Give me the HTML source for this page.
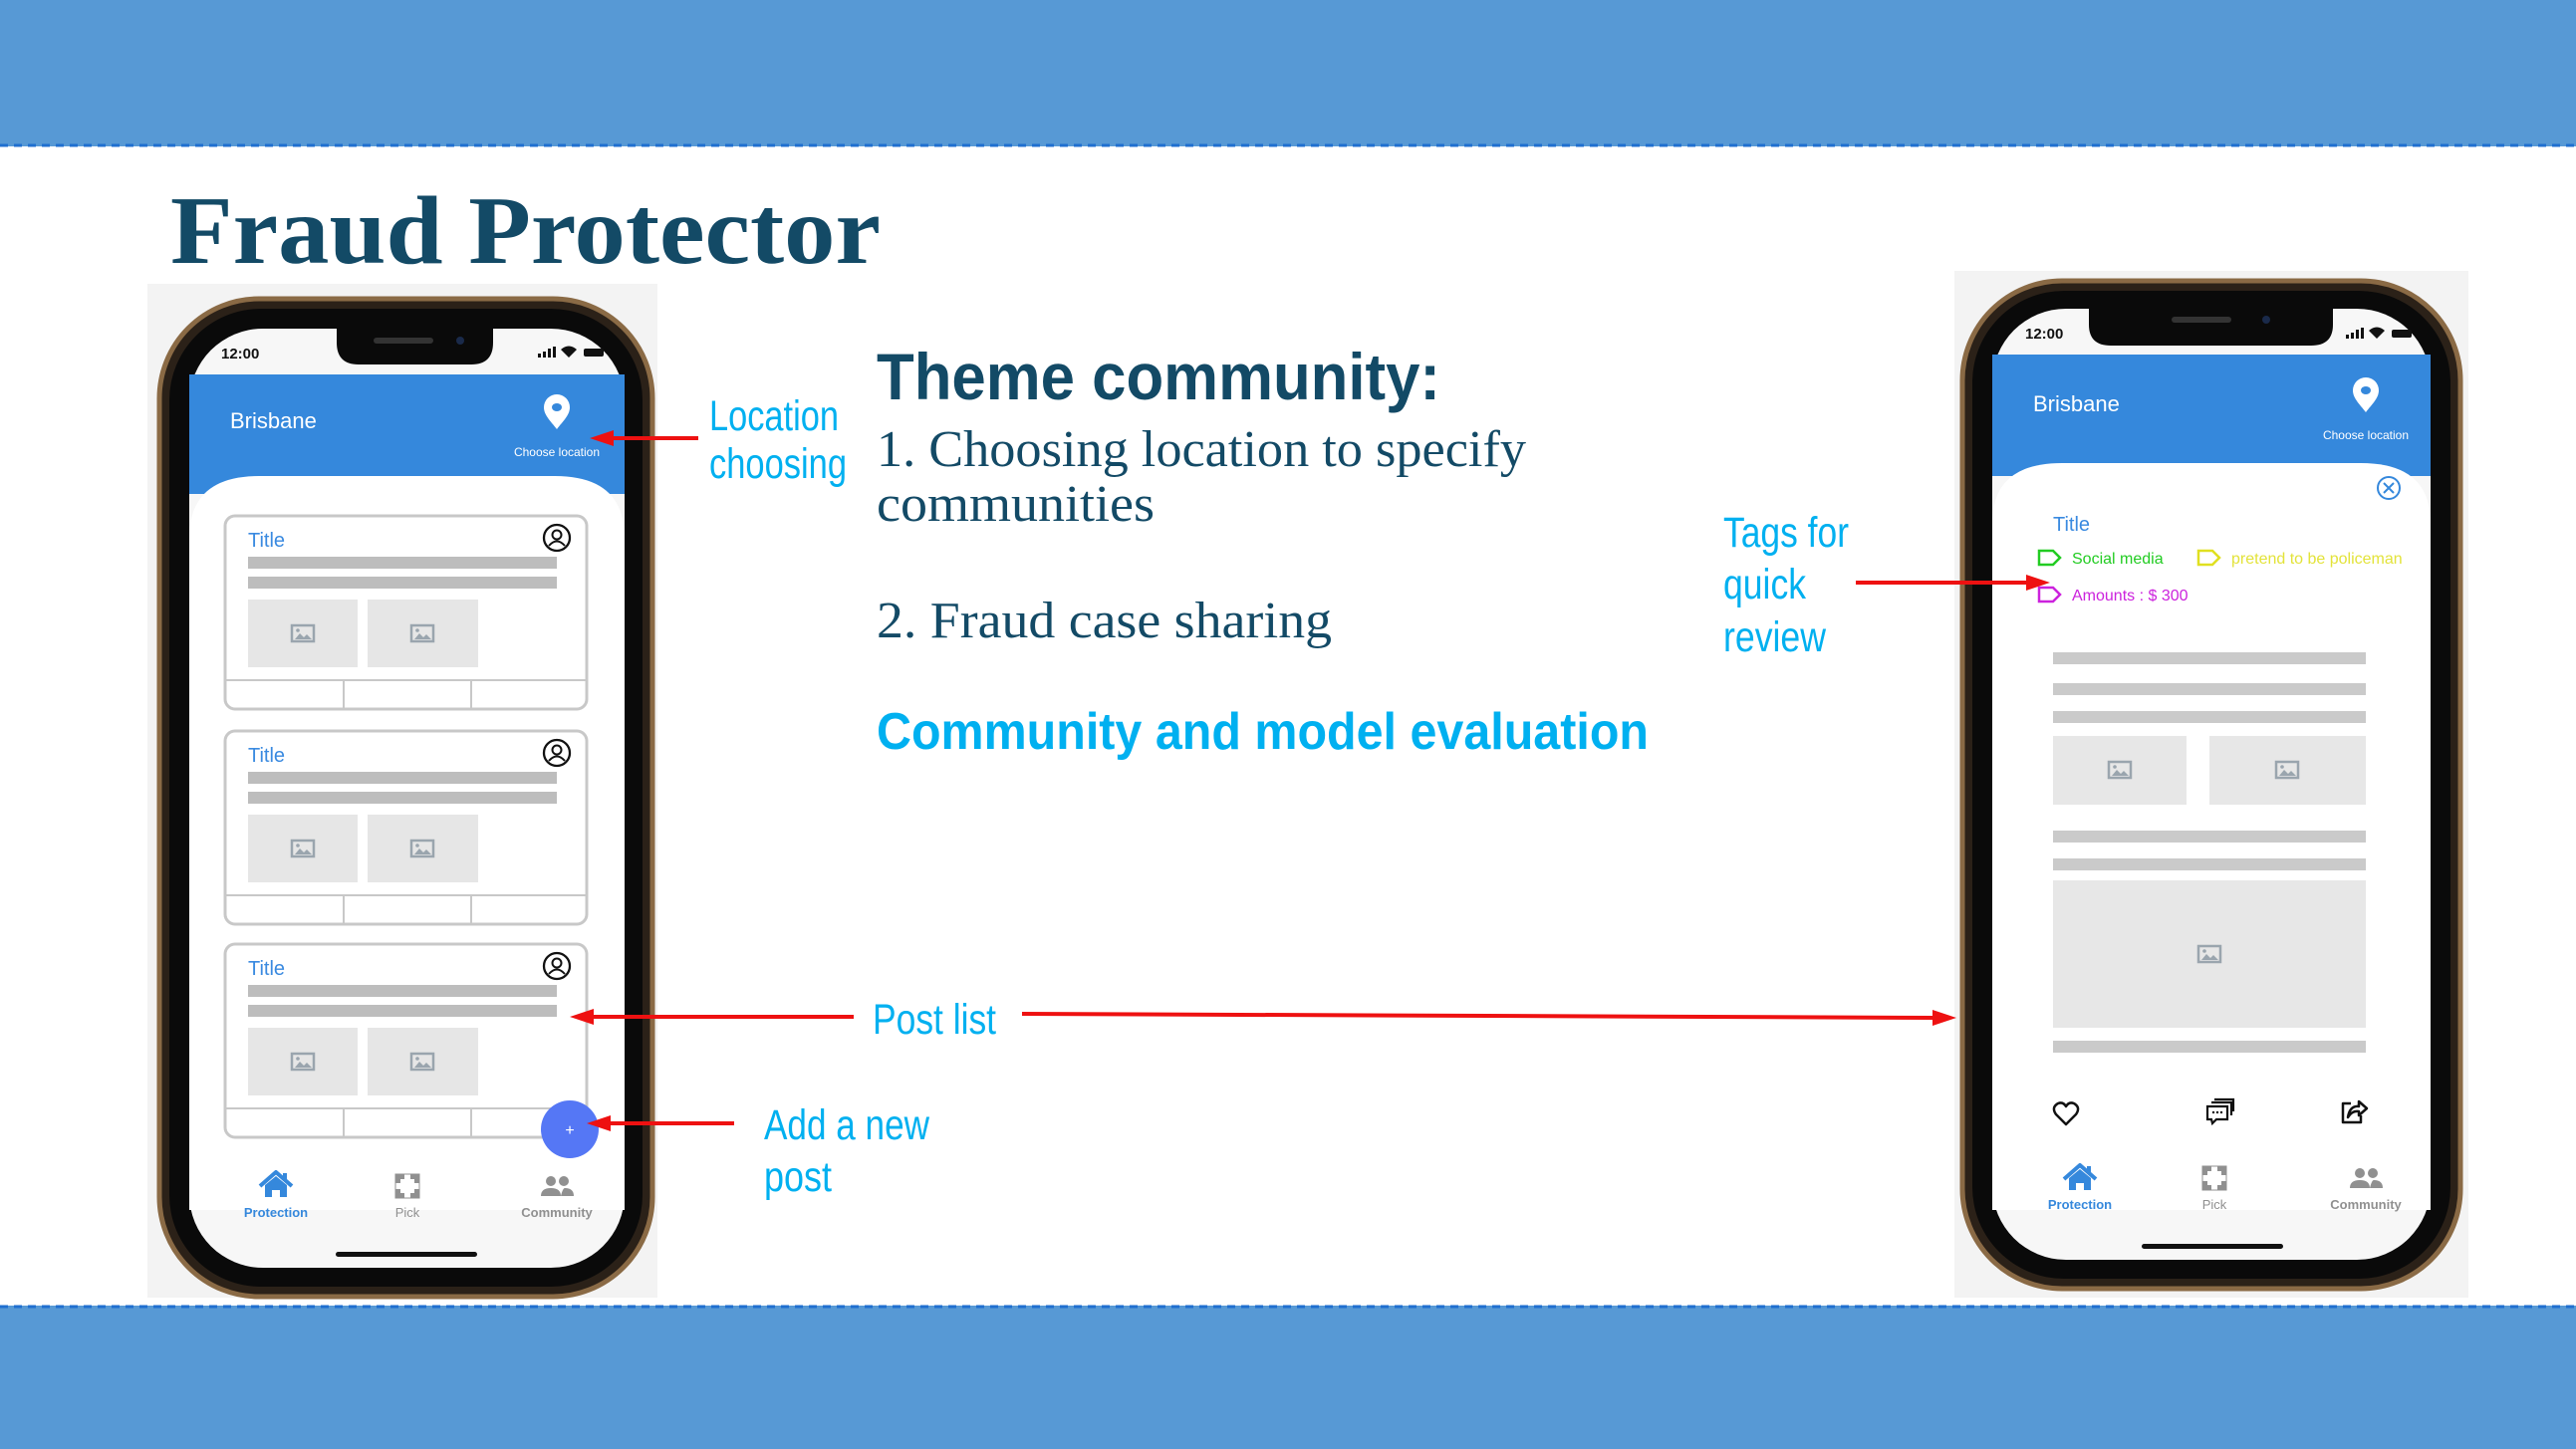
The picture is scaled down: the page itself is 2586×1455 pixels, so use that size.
<!DOCTYPE html>
<html><head><meta charset="utf-8"><style>html,body{margin:0;padding:0;background:#fff}svg{display:block}</style></head>
<body>
<svg width="2586" height="1455" viewBox="0 0 2586 1455" xmlns="http://www.w3.org/2000/svg" font-family="Liberation Sans, sans-serif">
<defs>
<g id="img"><rect x="-11" y="-8" width="22" height="16" fill="none" stroke="#9aa5ae" stroke-width="2.5"/><path d="M-8 6 L-3 0 L1 4 L4 1 L9 6 Z" fill="#9aa5ae"/><circle cx="-5" cy="-3" r="1.8" fill="#9aa5ae"/></g>
<g id="av"><circle r="13" fill="#fff" stroke="#111" stroke-width="2.3"/><circle cx="0" cy="-3" r="4.5" fill="none" stroke="#111" stroke-width="2"/><path d="M-8 8 Q0 -1 8 8" fill="none" stroke="#111" stroke-width="2"/></g>
<g id="pin"><path d="M0 18 C-6 10 -13 4 -13 -4 A13 13 0 0 1 13 -4 C13 4 6 10 0 18 Z" fill="#fff"/><ellipse cx="0" cy="-4" rx="5" ry="4" fill="#3588dc"/></g>
<g id="home"><path d="M-16 1 L0 -13 L16 1 M9 -12 L9 -6" fill="none" stroke="#3588dc" stroke-width="4" stroke-linejoin="round"/><path d="M-11 0 L0 -9 L11 0 L11 12 L4 12 L4 5 L-4 5 L-4 12 L-11 12 Z" fill="#3588dc"/></g>
<g id="pick" fill="#909090"><path d="M-12 -12 H-3 V-7 H-7 V-3 H-12 Z M12 -12 H3 V-7 H7 V-3 H12 Z M-12 12 H-3 V7 H-7 V3 H-12 Z M12 12 H3 V7 H7 V3 H12 Z"/><rect x="-12" y="-12" width="24" height="24" fill="none" stroke="#909090" stroke-width="1"/></g>
<g id="comm" fill="#909090"><circle cx="-6" cy="-6" r="5"/><circle cx="7" cy="-6" r="5"/><path d="M-16 9 Q-16 1 -6 1 Q4 1 4 9 Z M4 9 Q6 1 8 1 Q17 1 17 9 Z"/></g>
</defs>

<!-- bands -->
<rect x="0" y="0" width="2586" height="147" fill="#5799d5"/>
<line x1="0" y1="146" x2="2586" y2="146" stroke="#1f6fd0" stroke-width="3" stroke-dasharray="8 6"/>
<rect x="0" y="1311" width="2586" height="144" fill="#5799d5"/>
<line x1="0" y1="1312" x2="2586" y2="1312" stroke="#1f6fd0" stroke-width="3" stroke-dasharray="8 6"/>

<!-- title -->
<text x="171" y="264" font-family="Liberation Serif, serif" font-weight="bold" font-size="98" fill="#134a66" textLength="713" lengthAdjust="spacingAndGlyphs">Fraud Protector</text>

<!-- middle text -->
<text x="880" y="401" font-weight="bold" font-size="66" fill="#134a66" textLength="566" lengthAdjust="spacingAndGlyphs">Theme community:</text>
<g font-family="Liberation Serif, serif" font-size="52" fill="#134a66">
<text x="880" y="468" textLength="652" lengthAdjust="spacingAndGlyphs">1. Choosing location to specify</text>
<text x="880" y="523" textLength="279" lengthAdjust="spacingAndGlyphs">communities</text>
<text x="880" y="640" textLength="457" lengthAdjust="spacingAndGlyphs">2. Fraud case sharing</text>
</g>
<text x="880" y="752" font-weight="bold" font-size="52" fill="#00b0f0" textLength="775" lengthAdjust="spacingAndGlyphs">Community and model evaluation</text>

<!-- labels -->
<g font-size="43" fill="#00b0f0">
<text x="712" y="432" textLength="130" lengthAdjust="spacingAndGlyphs">Location</text>
<text x="712" y="480" textLength="138" lengthAdjust="spacingAndGlyphs">choosing</text>
<text x="876" y="1038" textLength="124" lengthAdjust="spacingAndGlyphs">Post list</text>
<text x="767" y="1144" textLength="166" lengthAdjust="spacingAndGlyphs">Add a new</text>
<text x="767" y="1196" textLength="68" lengthAdjust="spacingAndGlyphs">post</text>
<text x="1730" y="549" textLength="126" lengthAdjust="spacingAndGlyphs">Tags for</text>
<text x="1730" y="601" textLength="83" lengthAdjust="spacingAndGlyphs">quick</text>
<text x="1730" y="654" textLength="103" lengthAdjust="spacingAndGlyphs">review</text>
</g>

<!-- ===== LEFT PHONE ===== -->
<rect x="148" y="285" width="512" height="1018" fill="#f3f3f3"/>
<rect x="160" y="300" width="495" height="1002" rx="100" fill="#2b2118" stroke="#8a6a45" stroke-width="5"/>
<rect x="170" y="310" width="475" height="982" rx="92" fill="#0a0a0a"/>
<rect x="190" y="330" width="437" height="943" rx="74" fill="#f7f7f7"/>
<rect x="190" y="376" width="437" height="120" fill="#3588dc"/>
<path d="M190 540 Q190 478 260 478 L557 478 Q627 478 627 540 L627 1160 L190 1160 Z" fill="#fff"/>
<rect x="190" y="1160" width="437" height="55" fill="#fff"/>
<path d="M338 330 H495 V344 Q495 366 473 366 H360 Q338 366 338 344 Z" fill="#0a0a0a"/>
<rect x="375" y="339" width="60" height="6" rx="3" fill="#333"/>
<circle cx="462" cy="342" r="4" fill="#1a2a4a"/>
<text x="222" y="360" font-size="15" font-weight="bold" fill="#111">12:00</text>
<g fill="#111"><rect x="540" y="355" width="3" height="4"/><rect x="545" y="353" width="3" height="6"/><rect x="550" y="350" width="3" height="9"/><rect x="555" y="348" width="3" height="11"/><path d="M563 351 Q571 344 579 351 L571 359 Z"/><rect x="586" y="350" width="20" height="8" rx="2"/></g>
<text x="231" y="430" font-size="22" fill="#fff">Brisbane</text>
<use href="#pin" x="559" y="413"/>
<text x="559" y="458" font-size="12" fill="#fff" text-anchor="middle">Choose location</text>

<!-- cards -->
<g transform="translate(226,518)">
<rect x="0" y="0" width="363" height="194" rx="10" fill="#fff" stroke="#c8c8c8" stroke-width="3"/>
<text x="23" y="31" font-size="20" fill="#3a8ae0">Title</text><use href="#av" x="333" y="22"/>
<rect x="23" y="41" width="310" height="12" fill="#bdbdbd"/><rect x="23" y="61" width="310" height="12" fill="#bdbdbd"/>
<rect x="23" y="84" width="110" height="68" fill="#e6e6e6"/><rect x="143" y="84" width="111" height="68" fill="#e6e6e6"/>
<use href="#img" x="78" y="118"/><use href="#img" x="198" y="118"/>
<line x1="0" y1="165" x2="363" y2="165" stroke="#c8c8c8" stroke-width="2"/><line x1="119" y1="165" x2="119" y2="194" stroke="#c8c8c8" stroke-width="2"/><line x1="247" y1="165" x2="247" y2="194" stroke="#c8c8c8" stroke-width="2"/>
</g>
<g transform="translate(226,734)">
<rect x="0" y="0" width="363" height="194" rx="10" fill="#fff" stroke="#c8c8c8" stroke-width="3"/>
<text x="23" y="31" font-size="20" fill="#3a8ae0">Title</text><use href="#av" x="333" y="22"/>
<rect x="23" y="41" width="310" height="12" fill="#bdbdbd"/><rect x="23" y="61" width="310" height="12" fill="#bdbdbd"/>
<rect x="23" y="84" width="110" height="68" fill="#e6e6e6"/><rect x="143" y="84" width="111" height="68" fill="#e6e6e6"/>
<use href="#img" x="78" y="118"/><use href="#img" x="198" y="118"/>
<line x1="0" y1="165" x2="363" y2="165" stroke="#c8c8c8" stroke-width="2"/><line x1="119" y1="165" x2="119" y2="194" stroke="#c8c8c8" stroke-width="2"/><line x1="247" y1="165" x2="247" y2="194" stroke="#c8c8c8" stroke-width="2"/>
</g>
<g transform="translate(226,948)">
<rect x="0" y="0" width="363" height="194" rx="10" fill="#fff" stroke="#c8c8c8" stroke-width="3"/>
<text x="23" y="31" font-size="20" fill="#3a8ae0">Title</text><use href="#av" x="333" y="22"/>
<rect x="23" y="41" width="310" height="12" fill="#bdbdbd"/><rect x="23" y="61" width="310" height="12" fill="#bdbdbd"/>
<rect x="23" y="84" width="110" height="68" fill="#e6e6e6"/><rect x="143" y="84" width="111" height="68" fill="#e6e6e6"/>
<use href="#img" x="78" y="118"/><use href="#img" x="198" y="118"/>
<line x1="0" y1="165" x2="363" y2="165" stroke="#c8c8c8" stroke-width="2"/><line x1="119" y1="165" x2="119" y2="194" stroke="#c8c8c8" stroke-width="2"/><line x1="247" y1="165" x2="247" y2="194" stroke="#c8c8c8" stroke-width="2"/>
</g>
<circle cx="572" cy="1134" r="29" fill="#5577f5"/>
<text x="572" y="1140" font-size="16" fill="#fff" text-anchor="middle">+</text>
<!-- nav -->
<use href="#home" x="277" y="1190"/><use href="#pick" x="409" y="1191"/><use href="#comm" x="559" y="1192"/>
<text x="277" y="1222" font-size="13" font-weight="bold" fill="#3588dc" text-anchor="middle">Protection</text>
<text x="409" y="1222" font-size="13" fill="#909090" text-anchor="middle">Pick</text>
<text x="559" y="1222" font-size="13" font-weight="bold" fill="#909090" text-anchor="middle">Community</text>
<rect x="337" y="1257" width="142" height="5" rx="2.5" fill="#111"/>

<!-- ===== RIGHT PHONE ===== -->
<rect x="1962" y="272" width="516" height="1031" fill="#f3f3f3"/>
<rect x="1970" y="282" width="500" height="1012" rx="100" fill="#2b2118" stroke="#8a6a45" stroke-width="5"/>
<rect x="1980" y="292" width="480" height="992" rx="92" fill="#0a0a0a"/>
<rect x="2000" y="310" width="440" height="955" rx="74" fill="#f7f7f7"/>
<rect x="2000" y="356" width="440" height="122" fill="#3588dc"/>
<path d="M2000 525 Q2000 465 2070 465 L2370 465 Q2440 465 2440 525 L2440 1215 L2000 1215 Z" fill="#fff"/>
<path d="M2097 310 H2342 V326 Q2342 347 2320 347 H2119 Q2097 347 2097 326 Z" fill="#0a0a0a"/>
<rect x="2180" y="318" width="60" height="6" rx="3" fill="#333"/>
<circle cx="2275" cy="321" r="4" fill="#1a2a4a"/>
<text x="2033" y="340" font-size="15" font-weight="bold" fill="#111">12:00</text>
<g fill="#111"><rect x="2355" y="336" width="3" height="4"/><rect x="2360" y="334" width="3" height="6"/><rect x="2365" y="331" width="3" height="9"/><rect x="2370" y="329" width="3" height="11"/><path d="M2378 332 Q2386 325 2394 332 L2386 340 Z"/><rect x="2401" y="331" width="20" height="8" rx="2"/></g>
<text x="2041" y="413" font-size="22" fill="#fff">Brisbane</text>
<use href="#pin" x="2375" y="396"/>
<text x="2375" y="441" font-size="12" fill="#fff" text-anchor="middle">Choose location</text>
<circle cx="2398" cy="490" r="11" fill="none" stroke="#3588dc" stroke-width="2"/>
<path d="M2393 485 L2403 495 M2403 485 L2393 495" stroke="#3588dc" stroke-width="2"/>
<text x="2061" y="533" font-size="20" fill="#3a8ae0">Title</text>
<path d="M2047 553 H2061 L2068 560 L2061 567 H2047 Z" fill="none" stroke="#22cc22" stroke-width="2.5"/>
<text x="2080" y="566" font-size="16" fill="#22cc22">Social media</text>
<path d="M2207 553 H2221 L2228 560 L2221 567 H2207 Z" fill="none" stroke="#e0e020" stroke-width="2.5"/>
<text x="2240" y="566" font-size="16" fill="#e3e33a">pretend to be policeman</text>
<path d="M2047 590 H2061 L2068 597 L2061 604 H2047 Z" fill="none" stroke="#cc22dd" stroke-width="2.5"/>
<text x="2080" y="603" font-size="16" fill="#cc22dd">Amounts : $ 300</text>
<g fill="#cacaca"><rect x="2061" y="655" width="314" height="12"/><rect x="2061" y="686" width="314" height="12"/><rect x="2061" y="714" width="314" height="12"/>
<rect x="2061" y="834" width="314" height="12"/><rect x="2061" y="862" width="314" height="12"/><rect x="2061" y="1045" width="314" height="12"/></g>
<g fill="#e7e7e7"><rect x="2061" y="739" width="134" height="69"/><rect x="2218" y="739" width="157" height="69"/><rect x="2061" y="884" width="314" height="148"/></g>
<use href="#img" x="2128" y="773"/><use href="#img" x="2296" y="773"/><use href="#img" x="2218" y="958"/>
<!-- action icons -->
<path d="M2074 1129 L2064 1119 Q2059 1112 2066 1108 Q2071 1106 2074 1111 Q2077 1106 2082 1108 Q2089 1112 2084 1119 Z" fill="none" stroke="#111" stroke-width="2.5" stroke-linejoin="round"/>
<g fill="none" stroke="#111" stroke-width="2.2"><path d="M2216 1111 H2236 V1124 H2225 L2221 1128 L2220 1124 H2216 Z"/><path d="M2220 1107 H2240 V1120"/><path d="M2223 1104 H2242 V1116"/></g>
<g fill="#111"><circle cx="2222" cy="1117" r="1.2"/><circle cx="2226" cy="1117" r="1.2"/><circle cx="2230" cy="1117" r="1.2"/></g>
<g fill="none" stroke="#111" stroke-width="2.5" stroke-linejoin="round"><path d="M2360 1108 H2352 V1127 H2370 V1120"/><path d="M2357 1122 Q2359 1110 2368 1111 V1106 L2376 1113 L2368 1120 V1116 Q2361 1115 2357 1122 Z"/></g>
<!-- nav -->
<use href="#home" x="2088" y="1183"/><use href="#pick" x="2223" y="1183"/><use href="#comm" x="2375" y="1184"/>
<text x="2088" y="1214" font-size="13" font-weight="bold" fill="#3588dc" text-anchor="middle">Protection</text>
<text x="2223" y="1214" font-size="13" fill="#909090" text-anchor="middle">Pick</text>
<text x="2375" y="1214" font-size="13" font-weight="bold" fill="#909090" text-anchor="middle">Community</text>
<rect x="2150" y="1249" width="142" height="5" rx="2.5" fill="#111"/>

<!-- arrows -->
<g stroke="#ee1111" stroke-width="4" fill="none">
<line x1="701" y1="440" x2="612" y2="440"/>
<line x1="857" y1="1021" x2="590" y2="1021"/>
<line x1="1026" y1="1018" x2="1945" y2="1022"/>
<line x1="737" y1="1128" x2="607" y2="1128"/>
<line x1="1863" y1="585" x2="2040" y2="585"/>
</g>
<g fill="#ee1111">
<path d="M592 440 L616 432 L616 448 Z"/>
<path d="M572 1021 L596 1013 L596 1029 Z"/>
<path d="M1964 1022 L1940 1014 L1940 1030 Z"/>
<path d="M589 1128 L613 1120 L613 1136 Z"/>
<path d="M2058 585 L2034 577 L2034 593 Z"/>
</g>
</svg>
</body></html>
